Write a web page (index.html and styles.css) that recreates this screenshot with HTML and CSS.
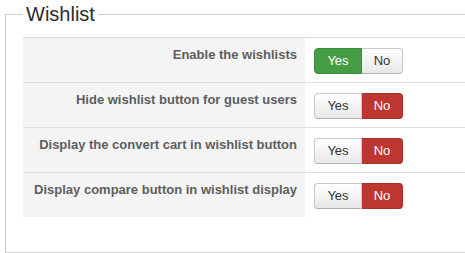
FILE: index.html
```html
<!DOCTYPE html>
<html>
<head>
<meta charset="utf-8">
<link rel="stylesheet" href="styles.css">
</head>
<body>
<fieldset class="panel">
  <legend class="panel-title">Wishlist</legend>
  <div class="settings">
    <div class="row">
      <div class="label">Enable the wishlists</div>
      <div class="control">
        <div class="toggle">
          <span class="btn btn-yes on-yes">Yes</span>
          <span class="btn btn-no">No</span>
        </div>
      </div>
    </div>
    <div class="row">
      <div class="label">Hide wishlist button for guest users</div>
      <div class="control">
        <div class="toggle">
          <span class="btn btn-yes">Yes</span>
          <span class="btn btn-no on-no">No</span>
        </div>
      </div>
    </div>
    <div class="row">
      <div class="label">Display the convert cart in wishlist button</div>
      <div class="control">
        <div class="toggle">
          <span class="btn btn-yes">Yes</span>
          <span class="btn btn-no on-no">No</span>
        </div>
      </div>
    </div>
    <div class="row">
      <div class="label">Display compare button in wishlist display</div>
      <div class="control">
        <div class="toggle">
          <span class="btn btn-yes">Yes</span>
          <span class="btn btn-no on-no">No</span>
        </div>
      </div>
    </div>
  </div>
</fieldset>
</body>
</html>
```
FILE: styles.css
```css
html, body {
  margin: 0;
  padding: 0;
  background: #fff;
  overflow: hidden;
  font-family: "Liberation Sans", Arial, sans-serif;
}

.panel {
  margin: 2px 0 0 5px;
  width: 540px;
  border: 1px solid #cfcfcf;
  padding: 11px 0 35px 17px;
  box-sizing: border-box;
  min-width: 0;
}

.panel-title {
  padding: 0 3px;
  font-size: 20px;
  line-height: 24px;
  color: #2b2b2b;
}

.settings {
  display: flex;
  flex-direction: column;
}

.row {
  display: grid;
  grid-template-columns: 282px 1fr;
  border-top: 1px solid #dedede;
}

.label {
  background: #f4f4f4;
  text-align: right;
  padding: 8px 8px 0 0;
  height: 44px;
  box-sizing: border-box;
  font-size: 13px;
  line-height: 18px;
  font-weight: bold;
  color: #5e5e5e;
}

.control {
  padding: 10px 0 0 9px;
}

.toggle {
  display: inline-flex;
}

.btn {
  box-sizing: border-box;
  height: 26px;
  font-size: 13px;
  line-height: 24px;
  text-align: center;
  color: #333;
  border: 1px solid #c8c8c8;
  border-bottom-color: #b0b0b0;
  background: linear-gradient(#ffffff, #e8e8e8);
}

.btn-yes {
  width: 48px;
  border-radius: 4px 0 0 4px;
}

.btn-no {
  width: 41px;
  border-left: none;
  border-radius: 0 4px 4px 0;
}

.on-yes {
  background: #469d46;
  border-color: #3d8c3d;
  color: #fff;
}

.on-no {
  background: #bd362f;
  border-color: #a9302a;
  color: #fff;
}
```
